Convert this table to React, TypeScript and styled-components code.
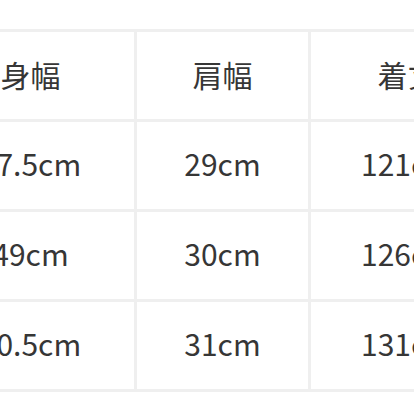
import React from "react";
import styled, { createGlobalStyle } from "styled-components";

const Global = createGlobalStyle`
  html, body { margin: 0; padding: 0; background: #ffffff; }
  body { width: 414px; height: 414px; overflow: hidden; }
`;

const Viewport = styled.div`
  width: 414px;
  height: 414px;
  overflow: hidden;
  background: #ffffff;
  padding-top: 29px;
  box-sizing: border-box;
`;

const Table = styled.div`
  display: grid;
  grid-template-columns: 207px 171px 193px;
  grid-auto-rows: 87px;
  gap: 3px;
  padding: 3px;
  background: #efefef;
  margin-left: -76px;
  width: max-content;
`;

const Cell = styled.div<{ $head?: boolean }>`
  background: #ffffff;
  display: flex;
  align-items: center;
  justify-content: center;
  box-sizing: border-box;
  padding-bottom: ${(p) => (p.$head ? "4px" : "6px")};
  font-family: "Noto Sans CJK JP", "Noto Sans", sans-serif;
  font-size: 30px;
  color: #363636;
  white-space: nowrap;
  line-height: 1;
`;

const rows = [
  ["身幅", "肩幅", "着丈"],
  ["47.5cm", "29cm", "121cm"],
  ["49cm", "30cm", "126cm"],
  ["50.5cm", "31cm", "131cm"],
];

export default function App() {
  return (
    <>
      <Global />
      <Viewport>
        <Table>
          {rows.map((r, i) =>
            r.map((c, j) => (
              <Cell key={`${i}-${j}`} $head={i === 0}>
                {c}
              </Cell>
            ))
          )}
        </Table>
      </Viewport>
    </>
  );
}
